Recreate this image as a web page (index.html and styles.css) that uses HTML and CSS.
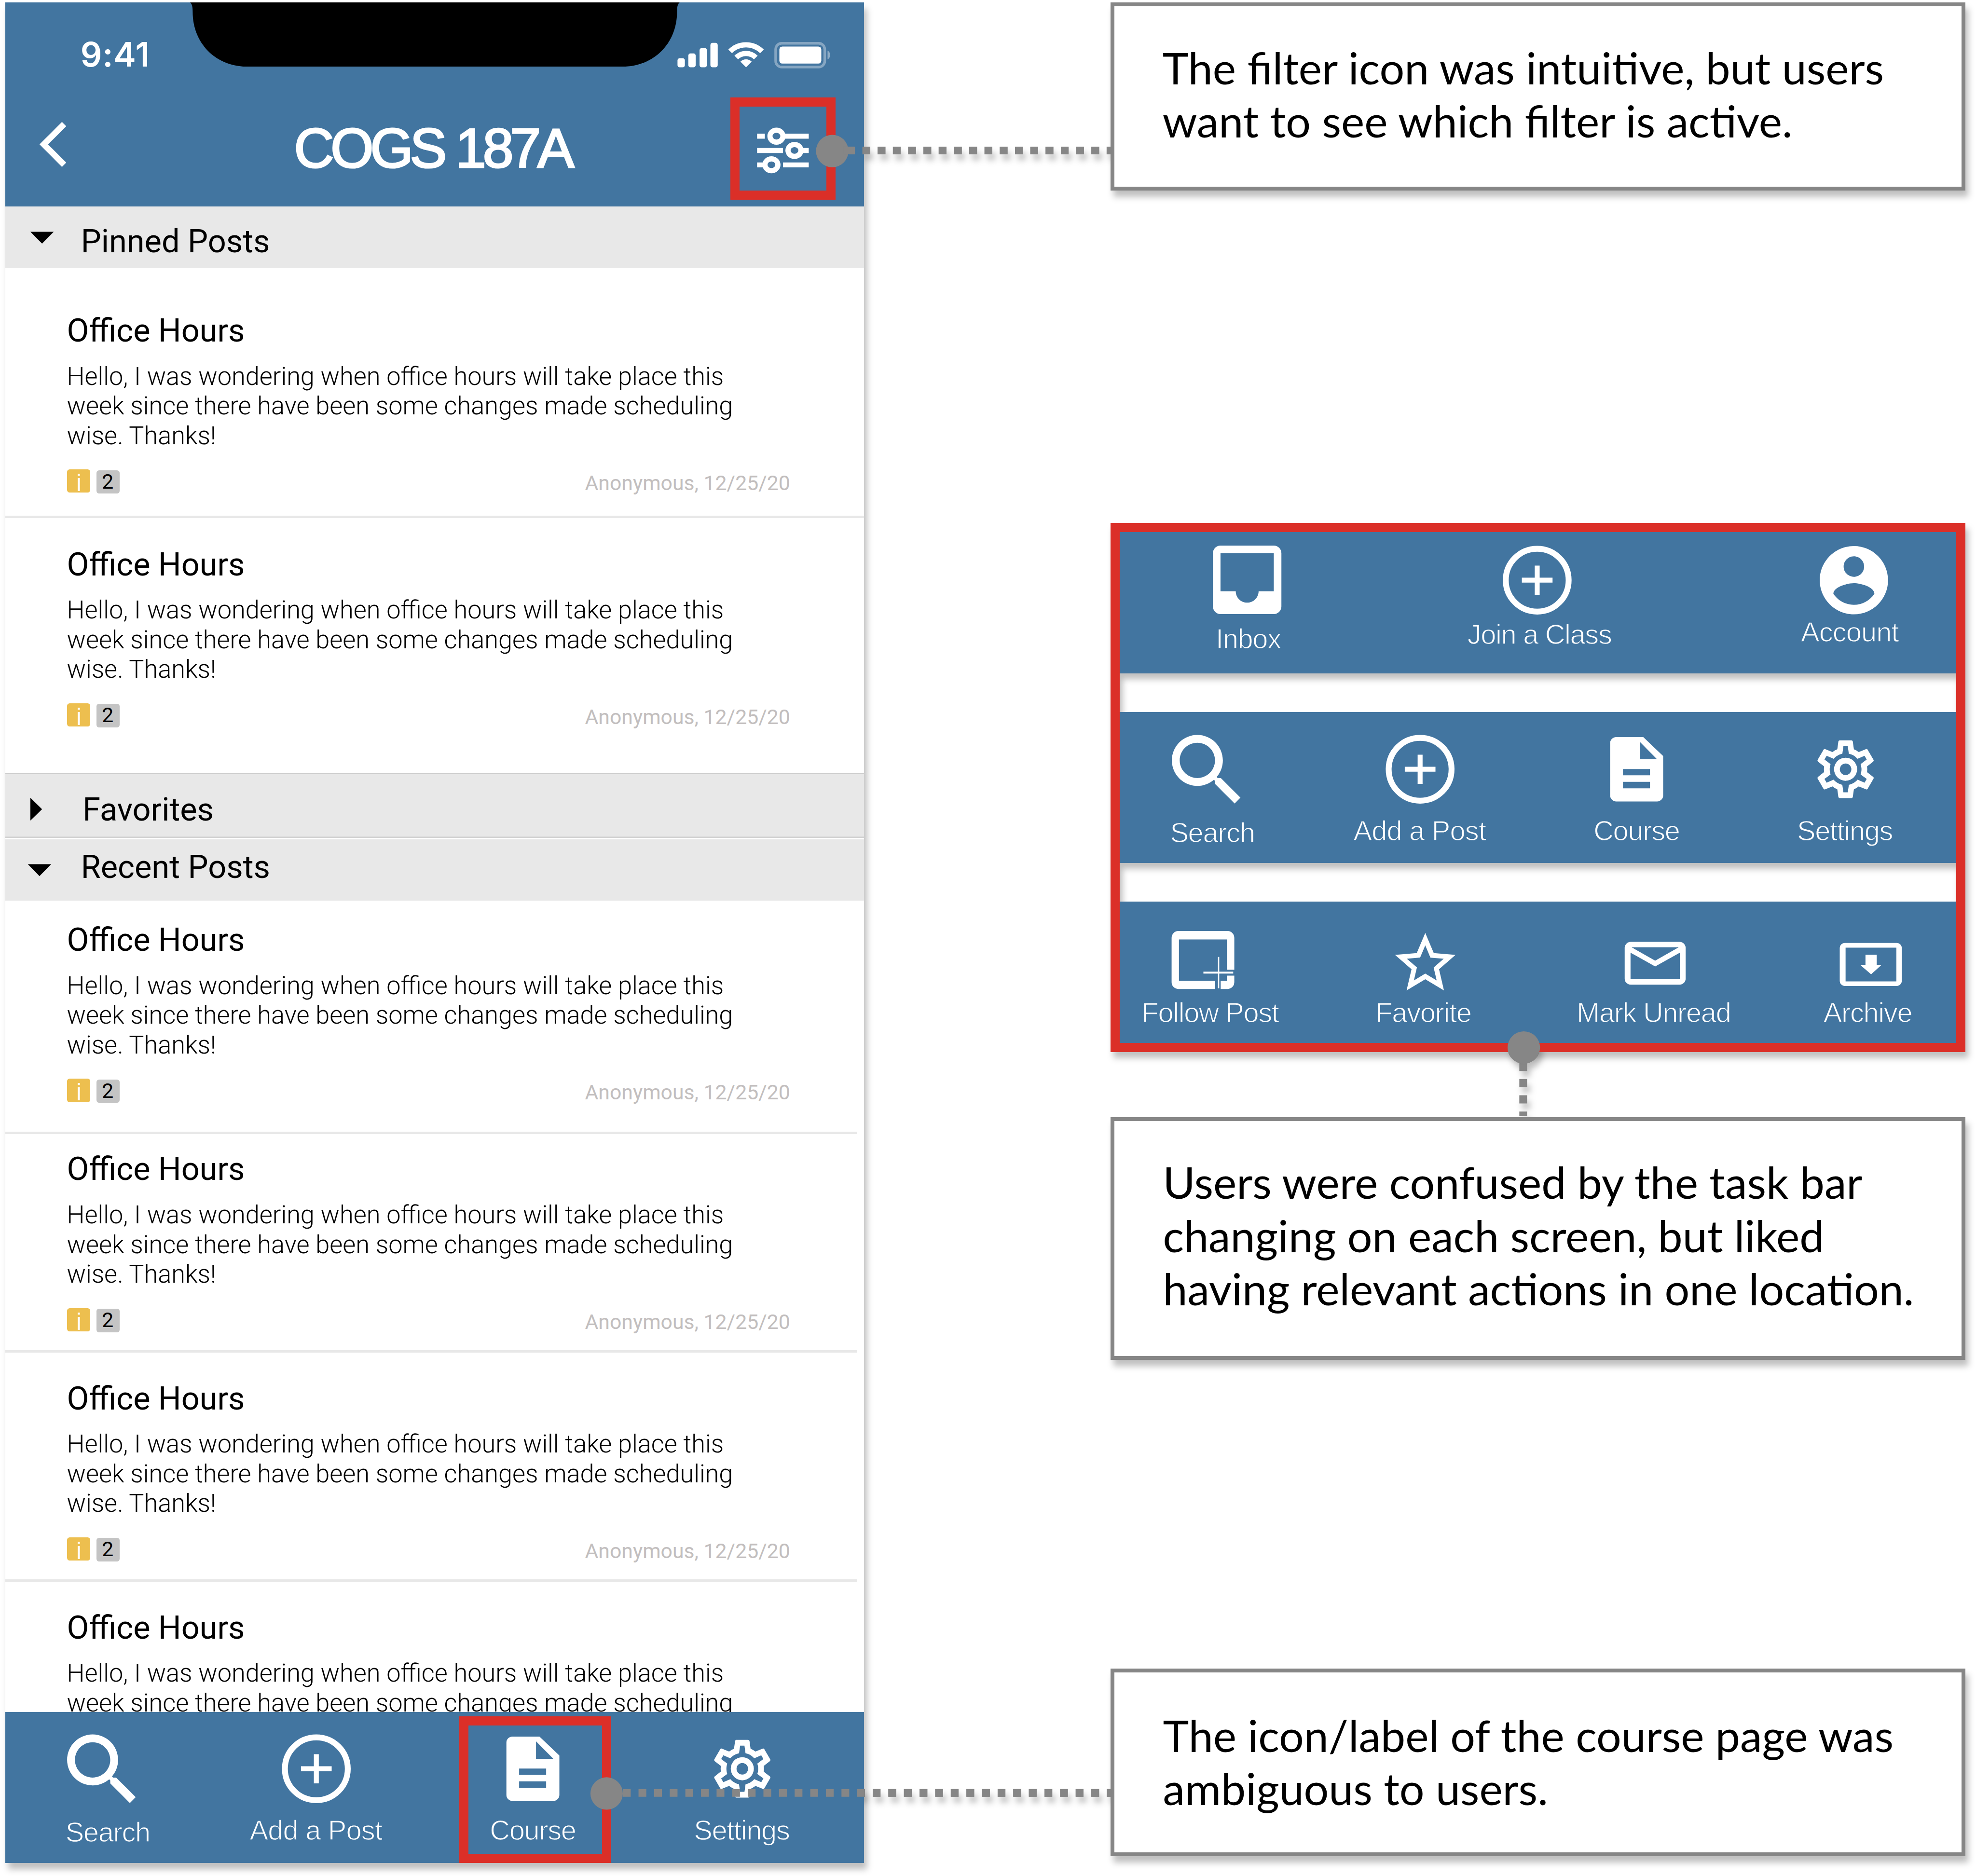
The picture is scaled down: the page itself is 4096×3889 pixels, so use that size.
FILE: index.html
```html
<!DOCTYPE html>
<html lang="en">
<head>
<meta charset="utf-8">
<title>COGS 187A – usability notes</title>
<link rel="stylesheet" href="styles.css">
</head>
<body>
<svg class="defs" aria-hidden="true">
  <symbol id="i-search" viewBox="0 0 160 160" overflow="visible"><path transform="translate(-42.7 -26.7) scale(9.07)" d="M15.5 14h-.79l-.28-.27C15.41 12.59 16 11.11 16 9.5 16 5.91 13.09 3 9.5 3S3 5.91 3 9.5 5.91 16 9.5 16c1.61 0 3.09-.59 4.23-1.57l.27.28v.79l5 4.99L20.49 19l-4.99-5zm-6 0C7.01 14 5 11.99 5 9.5S7.01 5 9.5 5 14 7.01 14 9.5 11.99 14 9.5 14z"/></symbol>
  <symbol id="i-add" viewBox="0 0 160 160" overflow="visible"><circle cx="80" cy="80" r="72.7" fill="none" stroke="#fff" stroke-width="13.6"/><path d="M44.5 74.3h71v11.4h-71zM74.3 46.3h11.4v67.4H74.3z"/></symbol>
  <symbol id="i-doc" viewBox="0 0 160 160" overflow="visible"><path fill-rule="evenodd" d="M31.5 5.5H94L140 49.5V140.5A14 14 0 0 1 126 154.5H31.5A14 14 0 0 1 17.5 140.5V19.5A14 14 0 0 1 31.5 5.5ZM86 16.5V57H126ZM47 79.5V94H109.5V79.5ZM47 109V124H109.5V109Z"/></symbol>
  <symbol id="i-gear" viewBox="0 0 160 160" overflow="visible"><path transform="translate(-.2 -.2) scale(6.68)" d="M12,8A4,4 0 0,1 16,12A4,4 0 0,1 12,16A4,4 0 0,1 8,12A4,4 0 0,1 12,8M12,10A2,2 0 0,0 10,12A2,2 0 0,0 12,14A2,2 0 0,0 14,12A2,2 0 0,0 12,10M10,22C9.75,22 9.54,21.82 9.5,21.58L9.13,18.93C8.5,18.68 7.96,18.34 7.44,17.94L4.95,18.95C4.73,19.03 4.46,18.95 4.34,18.73L2.34,15.27C2.21,15.05 2.27,14.78 2.46,14.63L4.57,12.97L4.5,12L4.57,11L2.46,9.37C2.27,9.22 2.21,8.95 2.34,8.73L4.34,5.27C4.46,5.05 4.73,4.96 4.95,5.05L7.44,6.05C7.96,5.66 8.5,5.32 9.13,5.07L9.5,2.42C9.54,2.18 9.75,2 10,2H14C14.25,2 14.46,2.18 14.5,2.42L14.87,5.07C15.5,5.32 16.04,5.66 16.56,6.05L19.05,5.05C19.27,4.96 19.54,5.05 19.66,5.27L21.66,8.73C21.79,8.95 21.73,9.22 21.54,9.37L19.43,11L19.5,12L19.43,13L21.54,14.63C21.73,14.78 21.79,15.05 21.66,15.27L19.66,18.73C19.54,18.95 19.27,19.04 19.05,18.95L16.56,17.95C16.04,18.34 15.5,18.68 14.87,18.93L14.5,21.58C14.46,21.82 14.25,22 14,22H10M11.25,4L10.88,6.61C9.68,6.86 8.62,7.5 7.85,8.39L5.44,7.35L4.69,8.65L6.8,10.2C6.4,11.37 6.4,12.64 6.8,13.8L4.68,15.36L5.43,16.66L7.86,15.62C8.63,16.5 9.68,17.14 10.87,17.38L11.24,20H12.76L13.13,17.39C14.32,17.14 15.37,16.5 16.14,15.62L18.57,16.66L19.32,15.36L17.2,13.81C17.6,12.64 17.6,11.37 17.2,10.2L19.31,8.65L18.56,7.35L16.15,8.39C15.38,7.5 14.32,6.86 13.12,6.62L12.75,4H11.25Z"/></symbol>
  <symbol id="i-inbox" viewBox="0 0 160 160" overflow="visible"><path transform="translate(-29.5 -26.4) scale(8.8)" d="M19 3H4.99c-1.11 0-1.98.89-1.98 2L3 19c0 1.1.88 2 1.99 2H19c1.1 0 2-.9 2-2V5c0-1.11-.9-2-2-2zm0 12h-4c0 1.66-1.35 3-3 3s-3-1.34-3-3H4.99V5H19v10z"/></symbol>
  <symbol id="i-account" viewBox="0 0 160 160" overflow="visible"><path transform="translate(-6.8 -14.8) scale(7.9)" d="M12 2C6.48 2 2 6.48 2 12s4.48 10 10 10 10-4.48 10-10S17.52 2 12 2zm0 3c1.66 0 3 1.34 3 3s-1.34 3-3 3-3-1.34-3-3 1.34-3 3-3zm0 14.2c-2.5 0-4.71-1.28-6-3.22.03-1.99 4-3.08 6-3.08 1.99 0 5.97 1.09 6 3.08-1.29 1.94-3.5 3.22-6 3.22z"/></symbol>
  <symbol id="i-follow" viewBox="0 0 160 160" overflow="visible"><path fill-rule="evenodd" d="M5 9H119A15.5 15.5 0 0 1 134.5 24.5V98.5H117.5V28.5H6.5V124H90V143H5A15.5 15.5 0 0 1 -10.5 127.5V24.5A15.5 15.5 0 0 1 5 9ZM134.5 112V127.5A15.5 15.5 0 0 1 119 143H103V124H117.5V112Z"/><path d="M96.7 69h3v72.5h-3zM63 103h69v4.3H63z"/></symbol>
  <symbol id="i-star" viewBox="0 0 160 160" overflow="visible"><path transform="translate(-1 -.5) scale(7)" d="M22 9.24l-7.19-.62L12 2 9.19 8.63 2 9.24l5.46 4.73L5.82 21 12 17.27 18.18 21l-1.63-7.03L22 9.24zM12 15.4l-3.76 2.27 1-4.28-3.32-2.88 4.38-.38L12 6.1l1.71 4.04 4.38.38-3.32 2.88 1 4.28L12 15.4z"/></symbol>
  <symbol id="i-mail" viewBox="0 0 160 160" overflow="visible"><path fill-rule="evenodd" d="M26 34H139A14 14 0 0 1 153 48V119A14 14 0 0 1 139 133H26A14 14 0 0 1 12 119V48A14 14 0 0 1 26 34ZM28 46.500L82.500 77.500L137 46.500ZM25.500 59V120H139.500V59L82.500 91Z"/></symbol>
  <symbol id="i-archive" viewBox="0 0 160 160" overflow="visible"><path fill-rule="evenodd" d="M26 36.500H145.500A12 12 0 0 1 157.500 48.500V124A12 12 0 0 1 145.500 136H26A12 12 0 0 1 14 124V48.500A12 12 0 0 1 26 36.500ZM27.500 47.500V125.500H145V47.500Z"/><path d="M73.500 64H99.500V87H111L86.500 109L61 87H73.500Z"/></symbol>
</svg>

<main class="board">
  <svg class="links links-under" viewBox="0 0 4569 4338" aria-hidden="true">
    <path class="link link-top" d="M1994 348H2569"/>
    <path class="link link-bottom" d="M1981.9 4146H2569"/>
    <path class="link link-mid" d="M3522 2457.5V2580"/>
    <circle cx="3523.4" cy="2422.3" r="37.5" fill="#868686"/>
  </svg>

  <section class="phone">
    <header class="header">
      <div class="status">
        <span class="time">9:41</span>
        <svg class="notch" viewBox="0 0 1130 148"><path d="M0 0C5 4 6 12 6 22C6 95 60 148.500 132 148.500H1000C1072 148.500 1126 95 1126 22C1126 12 1127 4 1132 0Z"/></svg>
        <svg class="indicators" viewBox="0 0 438 148">
          <g fill="#fff">
            <rect x="6" y="129" width="17" height="21" rx="5"/><rect x="31" y="118" width="17" height="32" rx="5"/><rect x="57" y="105.5" width="17" height="44.5" rx="5"/><rect x="82" y="93.5" width="17" height="56.5" rx="5"/>
            <path d="M164.5 150L151.5 137A18.4 18.4 0 0 1 177.5 137Z"/>
            <rect x="241.500" y="102" width="97" height="39.500" rx="7"/>
            <path d="M353 111.5C361 115 361 128 353 131.5Z" opacity=".4"/>
          </g>
          <g fill="none" stroke="#fff">
            <path stroke-width="12" d="M127.7 113.2A52 52 0 0 1 201.3 113.2M141.9 127.4A32 32 0 0 1 187.1 127.4"/>
            <rect x="233" y="94.5" width="113.500" height="55" rx="14" stroke-width="6" opacity=".36"/>
          </g>
        </svg>
      </div>
      <div class="titlebar">
        <svg class="back" viewBox="0 0 160 323"><path d="M136 133L89 180L136 227" fill="none" stroke="#fff" stroke-width="14"/></svg>
        <h1 class="title">COGS 187A</h1>
        <div class="filter">
          <svg viewBox="0 0 201 195" fill="none" stroke="#fff" stroke-width="11.5">
            <path d="M40.5 68.3H58.5M104 68.3H160M40.5 101.5H100.5M146 101.5H160M40.5 134.8H56M100.5 134.8H160"/>
            <g stroke-width="12"><ellipse cx="85.3" cy="68.3" rx="15" ry="13.7"/><ellipse cx="127" cy="101.3" rx="15" ry="13.7"/><ellipse cx="73.7" cy="134.5" rx="15" ry="13.7"/></g>
          </svg>
        </div>
      </div>
    </header>

    <div class="feed">
      <h2 class="group group-pinned"><svg class="caret" viewBox="0 0 175 143"><path d="M58 58.5H112L85 86Z"/></svg>Pinned Posts</h2>
      <article class="post post-a">
        <h3 class="post-title">Office Hours</h3>
        <p class="post-body">Hello, I was wondering when office hours will take place this<br>week since there have been some changes made scheduling<br>wise. Thanks!</p>
        <div class="meta"><span class="badge badge-i">i</span><span class="badge badge-n">2</span><span class="by">Anonymous, 12/25/20</span></div>
      </article>
      <article class="post post-b">
        <h3 class="post-title">Office Hours</h3>
        <p class="post-body">Hello, I was wondering when office hours will take place this<br>week since there have been some changes made scheduling<br>wise. Thanks!</p>
        <div class="meta"><span class="badge badge-i">i</span><span class="badge badge-n">2</span><span class="by">Anonymous, 12/25/20</span></div>
      </article>
      <h2 class="group group-fav"><svg class="caret caret-fav" viewBox="0 0 179 143"><path d="M58 54.5L85 81L58 107Z"/></svg>Favorites</h2>
      <h2 class="group group-recent"><svg class="caret" viewBox="0 0 175 143"><path d="M52 57.5H106L79 85Z"/></svg>Recent Posts</h2>
      <article class="post post-c">
        <h3 class="post-title">Office Hours</h3>
        <p class="post-body">Hello, I was wondering when office hours will take place this<br>week since there have been some changes made scheduling<br>wise. Thanks!</p>
        <div class="meta"><span class="badge badge-i">i</span><span class="badge badge-n">2</span><span class="by">Anonymous, 12/25/20</span></div>
      </article>
      <article class="post post-d">
        <h3 class="post-title">Office Hours</h3>
        <p class="post-body">Hello, I was wondering when office hours will take place this<br>week since there have been some changes made scheduling<br>wise. Thanks!</p>
        <div class="meta"><span class="badge badge-i">i</span><span class="badge badge-n">2</span><span class="by">Anonymous, 12/25/20</span></div>
      </article>
      <article class="post post-e">
        <h3 class="post-title">Office Hours</h3>
        <p class="post-body">Hello, I was wondering when office hours will take place this<br>week since there have been some changes made scheduling<br>wise. Thanks!</p>
        <div class="meta"><span class="badge badge-i">i</span><span class="badge badge-n">2</span><span class="by">Anonymous, 12/25/20</span></div>
      </article>
      <article class="post post-f">
        <h3 class="post-title">Office Hours</h3>
        <p class="post-body">Hello, I was wondering when office hours will take place this<br>week since there have been some changes made scheduling</p>
      </article>
    </div>

    <nav class="tabs tabs-course tabs-phone">
      <div class="tab tab-search"><svg><use href="#i-search"/></svg><span>Search</span></div>
      <div class="tab tab-add"><svg><use href="#i-add"/></svg><span>Add a Post</span></div>
      <div class="tab tab-course"><svg><use href="#i-doc"/></svg><span>Course</span></div>
      <div class="tab tab-settings"><svg><use href="#i-gear"/></svg><span>Settings</span></div>
      <div class="highlight"></div>
    </nav>
  </section>

  <div class="notes">
    <p class="note note-filter">The filter icon was intuitive, but users<br>want to see which filter is active.</p>
    <div class="bars">
      <nav class="tabs tabs-home">
        <div class="tab tab-inbox"><svg><use href="#i-inbox"/></svg><span>Inbox</span></div>
        <div class="tab tab-join"><svg><use href="#i-add" x="-7"/></svg><span>Join a Class</span></div>
        <div class="tab tab-account"><svg><use href="#i-account"/></svg><span>Account</span></div>
      </nav>
      <nav class="tabs tabs-course tabs-panel">
        <div class="tab tab-search"><svg><use href="#i-search"/></svg><span>Search</span></div>
        <div class="tab tab-add"><svg><use href="#i-add"/></svg><span>Add a Post</span></div>
        <div class="tab tab-course"><svg><use href="#i-doc"/></svg><span>Course</span></div>
        <div class="tab tab-settings"><svg><use href="#i-gear"/></svg><span>Settings</span></div>
      </nav>
      <nav class="tabs tabs-post">
        <div class="tab tab-follow"><svg><use href="#i-follow"/></svg><span>Follow Post</span></div>
        <div class="tab tab-favorite"><svg><use href="#i-star"/></svg><span>Favorite</span></div>
        <div class="tab tab-unread"><svg><use href="#i-mail"/></svg><span>Mark Unread</span></div>
        <div class="tab tab-archive"><svg><use href="#i-archive"/></svg><span>Archive</span></div>
      </nav>
    </div>
    <p class="note note-bars">Users were confused by the task bar<br>changing on each screen, but liked<br>having relevant actions in one location.</p>
    <p class="note note-course">The icon/label of the course page was<br>ambiguous to users.</p>
  </div>

  <svg class="links links-over" viewBox="0 0 4569 4338" aria-hidden="true">
    <path class="link link-top" d="M1958.7 348H2569"/>
    <path class="link link-bottom" d="M1440.3 4146H2569"/>
    <g fill="#868686"><circle cx="1924.3" cy="349.3" r="37.5"/><path d="M1950 339h26v18h-26z"/><circle cx="1402.6" cy="4147.3" r="37.5"/><circle cx="3523.4" cy="2422.3" r="37.5"/></g>
  </svg>
</main>
</body>
</html>
```
FILE: styles.css
```css
:root {
  --blue: #4275a0;
  --red: #db2f28;
  --gray: #868686;
  --band: #e8e8e8;
}

* { box-sizing: border-box; }
html, body { margin: 0; background: #fff; overflow: hidden; }
h1, h2, h3, p { margin: 0; font-weight: 400; }
svg { display: block; overflow: visible; flex: none; }
.defs { position: absolute; width: 0; height: 0; }

/* The board is laid out on a 4569 x 4338 grid and scaled to a 4096px window. */
.board {
  zoom: 0.89648;
  position: relative;
  display: flex;
  width: 4569px;
  height: 4338px;
  color: #000;
}

/* Connectors */
.links { position: absolute; left: 0; top: 0; width: 4569px; height: 4338px; }
.links-under { z-index: 0; filter: drop-shadow(7px 14px 7px rgba(0, 0, 0, .25)); }
.links-over { z-index: 2; }
.link { fill: none; stroke: var(--gray); stroke-width: 18px; }
.link-top { stroke-dasharray: 18 17.3; }
.link-bottom { stroke-dasharray: 18 18.1; }
.link-mid { stroke-dasharray: 19 18.6; }

/* Phone */
.phone {
  position: relative;
  z-index: 1;
  width: 1986px;
  height: 4301.7px;
  margin: 6px 0 0 12px;
  display: flex;
  flex-direction: column;
  background: #fff;
  box-shadow: 7px 14px 14px rgba(0, 0, 0, .25);
}
.header { height: 471px; background: var(--blue); color: #fff; }
.status { display: flex; width: 1986px; height: 148px; }
.time {
  flex: none;
  width: 254px;
  margin: 73.4px 0 0 174px;
  font: 600 78px/94.4px Inter, sans-serif;
  letter-spacing: .9px;
}
.notch { width: 1130px; height: 148px; margin-right: -10px; }
.indicators { width: 438px; height: 148px; }
.titlebar { display: flex; align-items: flex-start; height: 323px; }
.back { width: 160px; height: 323px; }
.title {
  margin: 117px 0 0 508px;
  font: 400 128px/144px "Liberation Sans", Arial, sans-serif;
  letter-spacing: -7.9px;
  -webkit-text-stroke: 3.6px #fff;
  white-space: nowrap;
}
.filter {
  width: 243px;
  height: 236.7px;
  margin: 71px 66px 0 auto;
  border: 21.2px solid var(--red);
}
.filter svg { width: 201px; height: 195px; }

.feed { flex: 1; min-height: 0; overflow: hidden; }
.group {
  display: flex;
  height: 143px;
  background: var(--band);
  font: 400 74.4px/88px Roboto, sans-serif;
  padding-top: 37.3px;
}
.caret { width: 175px; height: 143px; margin-top: -37.3px; }
.caret-fav { width: 179px; margin-top: -37.6px; }
.group-fav {
  height: 153.5px;
  padding-top: 37.6px;
  border-top: 3.4px solid #ccc;
  border-bottom: 3.4px solid #fff;
  box-shadow: inset 0 -3px 0 #d2d2d2;
}
.group-recent { height: 142.5px; padding-top: 20.1px; }
.group-recent .caret { margin-top: -20.1px; }

.post { padding: 0 171px 0 142.5px; }
.post-title { font: 400 74.4px/88px Roboto, sans-serif; }
.post-body { margin-top: 27.5px; font: 300 58.3px/68.8px Roboto, sans-serif; white-space: nowrap; }
.meta { display: flex; margin-top: 43px; font: 400 47.66px/54px Roboto, sans-serif; }
.badge { width: 53px; height: 54px; border-radius: 6px; text-align: center; }
.badge-i {
  background: #edbf4f;
  color: #fff;
  margin-left: 1px;
  font: 400 55px/62px "Liberation Sans", Arial, sans-serif;
}
.badge-n { margin: 2px 0 0 15px; background: #c4c4c4; line-height: 53px; text-indent: -2px; }
.by { margin: 4.4px 0 0 auto; color: #c2bebe; }

.post-a { height: 578px; padding-top: 100.6px; border-bottom: 5.7px solid var(--band); }
.post-b { height: 589px; padding-top: 63.1px; }
.post-c { height: 539.5px; padding-top: 46.6px; }
.post-d { height: 505.5px; padding-top: 37.4px; }
.post-e { height: 529.5px; padding-top: 61.8px; }
.post-f { padding-top: 62.2px; }
.post-c, .post-d, .post-e {
  background: linear-gradient(var(--band), var(--band)) left bottom / 1969.5px 5.7px no-repeat #fff;
}

/* Tab bars */
.tabs { position: relative; flex: none; display: flex; background: var(--blue); color: #fff; }
.tab { flex: none; width: 360px; display: flex; flex-direction: column; align-items: center; }
.tab svg { width: 160px; height: 160px; fill: #fff; }
.tab use { width: 160px; height: 160px; }
.tab span {
  font: 400 64.5px/72px "Liberation Sans", Arial, sans-serif;
  letter-spacing: -1.5px;
  -webkit-text-stroke: 1.5px var(--blue);
  white-space: nowrap;
  margin-right: 3px;
}
.tabs-course { height: 348.6px; padding: 52px 0 0 35.5px; }
.tabs-phone { height: 349.4px; padding-left: 58.5px; }
.tabs-course .tab span { margin-top: 26px; }
.tabs-course .tab-search span { margin-top: 31px; }
.tabs-course .tab-add span { letter-spacing: -.9px; }
.tab-add { margin-left: 121.5px; }
.tab-course { margin-left: 141.5px; }
.tab-settings { margin-left: 123px; }
.tabs-panel .tab-add { margin-left: 119.5px; }
.tabs-panel .tab-settings { margin-left: 121.5px; }
.highlight {
  position: absolute;
  left: 1049.7px;
  top: 10.7px;
  width: 351.3px;
  height: 338.7px;
  border: 21.2px solid var(--red);
}

.tabs-home { height: 327.3px; padding: 31px 0 0 118.5px; }
.tab-join { margin-left: 313.5px; }
.tab-account { margin-left: 357.5px; }
.tab-inbox span { margin-top: 20px; }
.tab-join span { margin-top: 10px; }
.tab-account span { margin-top: 4px; }
.tab-account span { letter-spacing: -1px; }

.tabs-post { height: 327.2px; padding: 59.6px 0 0 30.5px; }
.tabs-post span { margin-top: 2px; }
.tab-favorite { margin-left: 133px; }
.tab-unread { margin-left: 172.5px; }
.tab-archive { margin-left: 135px; }

/* Notes column */
.notes { position: relative; z-index: 1; width: 1976px; margin-left: 570px; }
.note {
  border: 9px solid var(--gray);
  background: #fff;
  padding: 79.5px 0 0 111px;
  font: 400 101.9px/123.5px Lato, sans-serif;
  white-space: nowrap;
  box-shadow: 7px 14px 14px rgba(0, 0, 0, .25);
}
.note-filter { height: 435px; margin-top: 6px; }
.bars {
  display: flex;
  flex-direction: column;
  gap: 89.3px;
  height: 1224px;
  margin-top: 768px;
  border: 21.2px solid var(--red);
  filter: drop-shadow(7px 14px 7px rgba(0, 0, 0, .25));
}
.note-bars { height: 561px; margin-top: 150px; padding-left: 112px; }
.note-course { height: 434px; margin-top: 714px; padding-top: 83.7px; padding-left: 112px; }
```
